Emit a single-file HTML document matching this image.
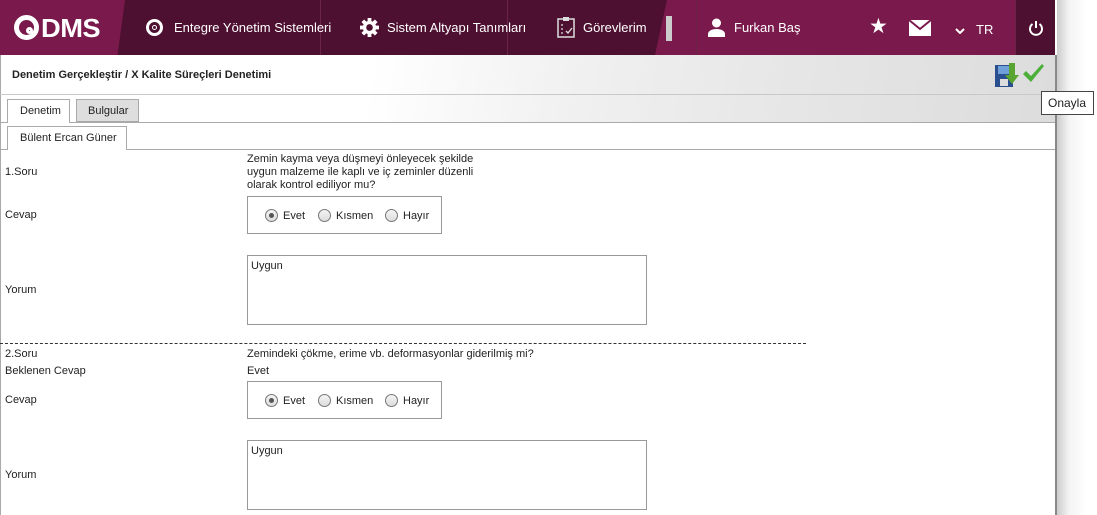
<!DOCTYPE html><html><head><meta charset="utf-8"><style>
*{margin:0;padding:0;box-sizing:border-box}
body{width:1097px;height:515px;overflow:hidden;background:#fff;font-family:"Liberation Sans",sans-serif;font-size:11px;color:#222;position:relative}
.a{position:absolute;white-space:nowrap}
.nav{position:absolute;left:0;top:0;width:1055px;height:55px;background:#4e1030}
.nt{color:#fff;font-size:13px;font-family:"Liberation Sans",sans-serif}
.sep{position:absolute;top:0;width:1px;height:55px;background:#6a2448}
.radio{position:absolute;width:13px;height:13px;border:1px solid #777;border-radius:50%;background:linear-gradient(#f4f4f4,#ddd)}
.box{position:absolute;border:1px solid #999;background:#fff}
</style></head><body>
<div style="position:absolute;left:1057px;top:0;width:40px;height:515px;background:linear-gradient(90deg,#ccc,#f4f4f4 12px,#fff 30px)"></div>
<div style="position:absolute;left:1055px;top:55px;width:2px;height:460px;background:#888"></div>
<div class="nav"></div>
<div style="position:absolute;left:0;top:0;width:125px;height:55px;background:#7a1a4c;clip-path:polygon(0 0,100% 0,94% 100%,0 100%)"></div>
<div style="position:absolute;left:655px;top:0;width:360px;height:55px;background:#7a1a4c;clip-path:polygon(12px 0,100% 0,100% 100%,0 100%)"></div>
<div style="position:absolute;left:1015px;top:0;width:40px;height:55px;background:#4e1030"></div>
<div class="sep" style="left:320px"></div><div class="sep" style="left:507px"></div><div class="sep" style="left:696px"></div><div class="sep" style="left:1015px"></div>
<div style="position:absolute;left:14px;top:15px;width:25px;height:25px;border:5px solid #fff;border-radius:50%"></div>
<div style="position:absolute;left:26px;top:27px;width:7px;height:7px;border:3px solid #fff;border-radius:50%"></div>
<div class="a" style="left:41px;top:13px;color:#fff;font:bold 26px 'Liberation Sans',sans-serif;letter-spacing:-0.5px;transform:scaleX(1.05);transform-origin:left">DMS</div>
<div style="position:absolute;left:146px;top:19px;width:17px;height:17px;border:3px solid #fff;border-radius:50%"></div>
<div style="position:absolute;left:152px;top:25px;width:5px;height:5px;border:1.5px solid #fff;border-radius:50%"></div>
<div class="a nt" style="left:174px;top:20px">Entegre Yönetim Sistemleri</div>
<svg class="a" style="left:360px;top:18px" width="19" height="19" viewBox="0 0 20 20"><g fill="#fff"><circle cx="10" cy="10" r="7"/><rect x="8" y="0" width="4" height="20"/><rect x="0" y="8" width="20" height="4"/><rect x="8" y="0" width="4" height="20" transform="rotate(45 10 10)"/><rect x="8" y="0" width="4" height="20" transform="rotate(-45 10 10)"/></g><circle cx="10" cy="10" r="3.5" fill="#4e1030"/></svg>
<div class="a nt" style="left:387px;top:20px">Sistem Altyapı Tanımları</div>
<svg class="a" style="left:557px;top:16px" width="18" height="22" viewBox="0 0 18 22"><rect x="1" y="3" width="16" height="18" fill="none" stroke="#ddd" stroke-width="1.5"/><rect x="6" y="1" width="6" height="4" fill="#ddd"/><path d="M4 9h2M4 13h2M4 17h2M9 15l2 2 4-5" stroke="#ddd" fill="none" stroke-width="1.3"/></svg>
<div class="a nt" style="left:583px;top:20px">Görevlerim</div>
<div style="position:absolute;left:666px;top:16px;width:6px;height:25px;background:#ccc"></div>
<svg class="a" style="left:708px;top:18px" width="17" height="19" viewBox="0 0 17 19"><circle cx="8.5" cy="5" r="4.5" fill="#fff"/><path d="M0 19v-3c0-3 4-5 8.5-5s8.5 2 8.5 5v3z" fill="#fff"/></svg>
<div class="a nt" style="left:734px;top:20px">Furkan Baş</div>
<div class="a" style="left:869px;top:14px;color:#fff;font-size:21px">★</div>
<svg class="a" style="left:909px;top:20px" width="22" height="16" viewBox="0 0 22 16"><rect width="22" height="16" fill="#fff"/><path d="M0 0l11 9 11-9" fill="none" stroke="#7a1a4c" stroke-width="2"/></svg>
<svg class="a" style="left:955px;top:28px" width="10" height="6"><path d="M1 1l4 4 4-4" stroke="#fff" stroke-width="2" fill="none"/></svg>
<div class="a nt" style="left:976px;top:22px;font-size:13px">TR</div>
<svg class="a" style="left:1028px;top:20px" width="16" height="16" viewBox="0 0 16 16"><path d="M4.5 4a6 6 0 1 0 7 0" stroke="#fff" stroke-width="2" fill="none"/><path d="M8 1v7" stroke="#fff" stroke-width="2"/></svg>
<div style="position:absolute;left:0;top:55px;width:1055px;height:67px;background:linear-gradient(100deg,#fff 0%,#fff 35%,#f0f0f0 55%,#e6e6e6 75%,#dcdcdc 100%)"></div>
<div style="position:absolute;left:0;top:55px;width:1px;height:460px;background:#aaa"></div>
<div class="a" style="left:12px;top:69px;font-weight:bold">Denetim Gerçekleştir / X Kalite Süreçleri Denetimi</div>
<div style="position:absolute;left:0;top:94px;width:1055px;height:1px;background:#c8c8c8"></div>
<svg class="a" style="left:995px;top:63px" width="24" height="25" viewBox="0 0 24 25"><rect x="0" y="2" width="18" height="22" fill="#2a4f8f"/><rect x="3" y="3" width="11" height="8" fill="#6f9fd8"/><rect x="5" y="16" width="8" height="7" fill="#ddd"/><path d="M14 0h6v12h4l-7 9-7-9h4z" fill="#5aa532"/></svg>
<svg class="a" style="left:1022px;top:64px" width="22" height="20" viewBox="0 0 22 20"><path d="M1 10l3-3 5 5 11-12 2 2-13 16z" fill="#4caf3a"/></svg>
<div class="a" style="left:1041px;top:91px;width:53px;height:24px;border:1px solid #444;background:#fff;font-size:12px;padding:4px 0 0 6px;font-family:'Liberation Sans',sans-serif">Onayla</div>
<div style="position:absolute;left:76px;top:99px;width:63px;height:23px;background:#dedede;border:1px solid #aaa"></div>
<div class="a" style="left:88px;top:105px">Bulgular</div>
<div style="position:absolute;left:0;top:122px;width:1055px;height:1px;background:#aaa"></div>
<div style="position:absolute;left:7px;top:99px;width:63px;height:24px;background:#fff;border:1px solid #aaa;border-bottom:none"></div>
<div class="a" style="left:20px;top:105px">Denetim</div>
<div style="position:absolute;left:0;top:149px;width:1055px;height:1px;background:#aaa"></div>
<div style="position:absolute;left:7px;top:126px;width:120px;height:24px;background:#fff;border:1px solid #aaa;border-bottom:none"></div>
<div class="a" style="left:20px;top:132px">Bülent Ercan Güner</div>
<div class="a" style="left:5px;top:166px">1.Soru</div>
<div class="a" style="left:247px;top:153px;line-height:13px">Zemin kayma veya düşmeyi önleyecek şekilde<br>uygun malzeme ile kaplı ve iç zeminler düzenli<br>olarak kontrol ediliyor mu?</div>
<div class="a" style="left:5px;top:209px">Cevap</div>
<div class="box" style="left:247px;top:196px;width:195px;height:38px"></div>
<div class="radio" style="left:265px;top:209px"><div style="width:5px;height:5px;background:#555;border-radius:50%;margin:3px"></div></div><div class="a" style="left:283px;top:210px">Evet</div>
<div class="radio" style="left:318px;top:209px"></div><div class="a" style="left:336px;top:210px">Kısmen</div>
<div class="radio" style="left:385px;top:209px"></div><div class="a" style="left:403px;top:210px">Hayır</div>
<div class="a" style="left:5px;top:284px">Yorum</div>
<div class="box" style="left:247px;top:255px;width:400px;height:70px"></div>
<div class="a" style="left:251px;top:260px">Uygun</div>
<div style="position:absolute;left:0;top:343px;width:806px;border-top:1px dashed #333"></div>
<div class="a" style="left:5px;top:348px">2.Soru</div>
<div class="a" style="left:247px;top:348px">Zemindeki çökme, erime vb. deformasyonlar giderilmiş mi?</div>
<div class="a" style="left:5px;top:365px">Beklenen Cevap</div>
<div class="a" style="left:247px;top:365px">Evet</div>
<div class="a" style="left:5px;top:394px">Cevap</div>
<div class="box" style="left:247px;top:381px;width:195px;height:38px"></div>
<div class="radio" style="left:265px;top:394px"><div style="width:5px;height:5px;background:#555;border-radius:50%;margin:3px"></div></div><div class="a" style="left:283px;top:395px">Evet</div>
<div class="radio" style="left:318px;top:394px"></div><div class="a" style="left:336px;top:395px">Kısmen</div>
<div class="radio" style="left:385px;top:394px"></div><div class="a" style="left:403px;top:395px">Hayır</div>
<div class="a" style="left:5px;top:469px">Yorum</div>
<div class="box" style="left:247px;top:440px;width:400px;height:70px"></div>
<div class="a" style="left:251px;top:445px">Uygun</div>
</body></html>
